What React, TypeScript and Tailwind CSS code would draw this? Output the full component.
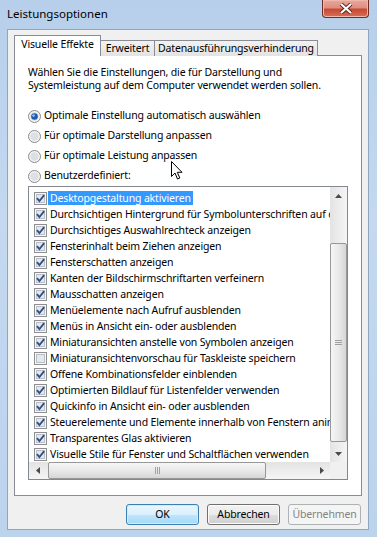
const items: [string, boolean][] = [
  ["Desktopgestaltung aktivieren", true],
  ["Durchsichtigen Hintergrund für Symbolunterschriften auf dem Desktop", true],
  ["Durchsichtiges Auswahlrechteck anzeigen", true],
  ["Fensterinhalt beim Ziehen anzeigen", true],
  ["Fensterschatten anzeigen", true],
  ["Kanten der Bildschirmschriftarten verfeinern", true],
  ["Mausschatten anzeigen", true],
  ["Menüelemente nach Aufruf ausblenden", true],
  ["Menüs in Ansicht ein- oder ausblenden", true],
  ["Miniaturansichten anstelle von Symbolen anzeigen", true],
  ["Miniaturansichtenvorschau für Taskleiste speichern", false],
  ["Offene Kombinationsfelder einblenden", true],
  ["Optimierten Bildlauf für Listenfelder verwenden", true],
  ["Quickinfo in Ansicht ein- oder ausblenden", true],
  ["Steuerelemente und Elemente innerhalb von Fenstern animieren", true],
  ["Transparentes Glas aktivieren", true],
  ["Visuelle Stile für Fenster und Schaltflächen verwenden", true],
];

const radios = [
  "Optimale Einstellung automatisch auswählen",
  "Für optimale Darstellung anpassen",
  "Für optimale Leistung anpassen",
  "Benutzerdefiniert:",
];

function CheckBox({ checked }: { checked: boolean }) {
  return (
    <svg width="13" height="13" viewBox="0 0 13 13" className="shrink-0">
      <rect x="0.5" y="0.5" width="12" height="12" fill="#f7f7f7" stroke="#8e8f8f" />
      <rect x="2.5" y="2.5" width="8" height="8" fill="#e4e8ee" stroke="#b9bfc7" />
      {checked && (
        <path d="M3 6.2 L5.4 9 L10.2 3.2" fill="none" stroke="#3a4d86" strokeWidth="1.9" />
      )}
    </svg>
  );
}

function Radio({ on }: { on: boolean }) {
  return (
    <svg width="13" height="13" viewBox="0 0 13 13" className="shrink-0">
      <circle cx="6.5" cy="6.5" r="6" fill="#f4f4f4" stroke="#8a8b8c" />
      <circle cx="6.5" cy="6.5" r="4.2" fill="#dcdfe4" />
      {on && (
        <>
          <circle cx="6.5" cy="6.5" r="3.3" fill="#1f5ba8" />
          <circle cx="5.6" cy="5.6" r="1.4" fill="#8fbcee" />
        </>
      )}
    </svg>
  );
}

function Tri({ dir }: { dir: "up" | "down" | "left" | "right" }) {
  const d = {
    up: "M0 4 L3.5 0 L7 4 Z",
    down: "M0 0 L7 0 L3.5 4 Z",
    left: "M4 0 L4 7 L0 3.5 Z",
    right: "M0 0 L4 3.5 L0 7 Z",
  }[dir];
  const vert = dir === "up" || dir === "down";
  return (
    <svg width={vert ? 7 : 4} height={vert ? 4 : 7} viewBox={vert ? "0 0 7 4" : "0 0 4 7"}>
      <path d={d} fill="#4a4a4a" />
    </svg>
  );
}

function Button({ label, kind }: { label: string; kind?: "default" | "disabled" }) {
  const base = "flex h-[21px] w-[73px] items-center justify-center rounded-[3px] border leading-none";
  if (kind === "default")
    return (
      <div className={`${base} border-[#3c7fb1] bg-[linear-gradient(to_bottom,#eaf6fd_0%,#d9f0fc_50%,#bee6fd_51%,#a7d9f5_100%)] shadow-[inset_0_0_0_1px_#cfeefd]`}>
        {label}
      </div>
    );
  if (kind === "disabled")
    return <div className={`${base} border-[#adb2b5] bg-[#f4f4f4] text-[#838383]`}>{label}</div>;
  return (
    <div className={`${base} border-[#707070] bg-[linear-gradient(to_bottom,#f2f2f2_0%,#ebebeb_50%,#dddddd_51%,#cfcfcf_100%)] shadow-[inset_0_0_0_1px_#fcfcfc]`}>
      {label}
    </div>
  );
}

export default function App() {
  return (
    <div className="relative h-[537px] w-[377px] overflow-hidden bg-[linear-gradient(to_bottom,#b7cfea_0%,#c4d9f0_40%,#bcd3ec_100%)] font-['Noto_Sans',sans-serif] text-[10.5px] tracking-[-0.15px] text-black">
      {/* title bar */}
      <div className="flex h-[29px] items-start">
        <div className="pl-[7px] pt-[6px] text-[11.5px] leading-[16px] tracking-normal">Leistungsoptionen</div>
        <div className="ml-auto mr-[8px] flex h-[18px] w-[47px] items-center justify-center rounded-b-[4px] border border-t-0 border-[#6b2d24] bg-[linear-gradient(to_bottom,#e8a89b_0%,#de8f80_45%,#c84a34_55%,#d66e57_100%)] shadow-[inset_0_0_0_1px_#f0b8ab]">
          <svg width="14" height="11" viewBox="0 0 14 11">
            <path d="M2 1 L12 10 M12 1 L2 10" stroke="#5a2018" strokeWidth="4" />
            <path d="M2 1 L12 10 M12 1 L2 10" stroke="#ffffff" strokeWidth="2.2" />
          </svg>
        </div>
      </div>

      {/* client area */}
      <div className="ml-[7px] mr-[8px] h-[501px] border border-[#8fa6c1] bg-[#f0f0f0] pl-[6px] pt-[5px]">
        {/* tabs */}
        <div className="relative z-10 -mb-px flex h-[21px] items-end whitespace-nowrap">
          <div className="flex h-[21px] w-[87px] items-center justify-center border border-b-0 border-[#898c95] bg-white pb-[2px]">
            Visuelle Effekte
          </div>
          <div className="-ml-px flex h-[16px] w-[55px] items-center justify-center border border-b-0 border-[#898c95] bg-[linear-gradient(to_bottom,#f2f2f2,#e3e3e3)]">
            Erweitert
          </div>
          <div className="-ml-px flex h-[16px] w-[164px] items-center justify-center border border-b-0 border-[#898c95] bg-[linear-gradient(to_bottom,#f2f2f2,#e3e3e3)]">
            Datenausführungsverhinderung
          </div>
        </div>

        {/* panel */}
        <div className="h-[441px] w-[348px] border border-[#898c95] bg-white pl-[13px] pt-[10px]">
          <p className="leading-[13px]">
            Wählen Sie die Einstellungen, die für Darstellung und
            <br />
            Systemleistung auf dem Computer verwendet werden sollen.
          </p>

          <div className="mt-[14px] flex flex-col">
            {radios.map((r, i) => (
              <div key={r} className="flex h-[20px] items-center gap-[3px]">
                <Radio on={i === 0} />
                <span>{r}</span>
              </div>
            ))}
          </div>

          {/* list view */}
          <div className="grid h-[294px] w-[320px] grid-cols-[1fr_17px] grid-rows-[1fr_17px] border border-[#828790]">
            <div className="overflow-hidden whitespace-nowrap pt-[3px]">
              {items.map(([t, c], i) => (
                <div key={t} className="flex h-[16px] items-center pl-[5px]">
                  <CheckBox checked={c} />
                  <span
                    className={`ml-[1px] h-[14px] px-[2px] leading-[14px] ${i === 0 ? "bg-[#3399ff] text-white" : ""}`}
                  >
                    {t}
                  </span>
                </div>
              ))}
            </div>

            {/* vertical scrollbar */}
            <div className="flex flex-col bg-[linear-gradient(to_right,#e3e3e3,#f5f5f5)]">
              <div className="flex h-[17px] items-center justify-center">
                <Tri dir="up" />
              </div>
              <div className="h-[39px]" />
              <div className="flex h-[199px] items-center justify-center rounded-[2px] border border-[#979797] bg-[linear-gradient(to_right,#f6f6f6,#e9e9e9_50%,#d6d6d6)]">
                <div className="flex flex-col gap-[1px]">
                  <div className="h-px w-[7px] bg-[#a0a0a0]" />
                  <div className="h-px w-[7px] bg-[#a0a0a0]" />
                  <div className="h-px w-[7px] bg-[#a0a0a0]" />
                </div>
              </div>
              <div className="flex-1" />
              <div className="flex h-[17px] items-center justify-center">
                <Tri dir="down" />
              </div>
            </div>

            {/* horizontal scrollbar */}
            <div className="flex bg-[linear-gradient(to_bottom,#e3e3e3,#f5f5f5)]">
              <div className="flex w-[17px] items-center justify-center">
                <Tri dir="left" />
              </div>
              <div className="w-[2px]" />
              <div className="flex w-[218px] items-center justify-center rounded-[2px] border border-[#979797] bg-[linear-gradient(to_bottom,#f6f6f6,#e9e9e9_50%,#d6d6d6)]">
                <div className="flex gap-[1px]">
                  <div className="h-[7px] w-px bg-[#a0a0a0]" />
                  <div className="h-[7px] w-px bg-[#a0a0a0]" />
                  <div className="h-[7px] w-px bg-[#a0a0a0]" />
                </div>
              </div>
              <div className="flex-1" />
              <div className="flex w-[17px] items-center justify-center">
                <Tri dir="right" />
              </div>
            </div>
            <div className="bg-[#f0f0f0]" />
          </div>
        </div>

        {/* buttons */}
        <div className="mt-[8px] flex justify-end gap-[8px] pr-[7px]">
          <Button label="OK" kind="default" />
          <Button label="Abbrechen" />
          <Button label="Übernehmen" kind="disabled" />
        </div>
      </div>

      {/* mouse cursor */}
      <svg
        className="absolute left-[171px] top-[161px]"
        width="12"
        height="19"
        viewBox="0 0 12 19"
      >
        <path
          d="M0.5 0.5 L0.5 15.5 L4 12 L6.5 18 L8.8 17 L6.3 11.3 L11 11.3 Z"
          fill="#ffffff"
          stroke="#000000"
          strokeWidth="1"
          strokeLinejoin="round"
        />
      </svg>
    </div>
  );
}
